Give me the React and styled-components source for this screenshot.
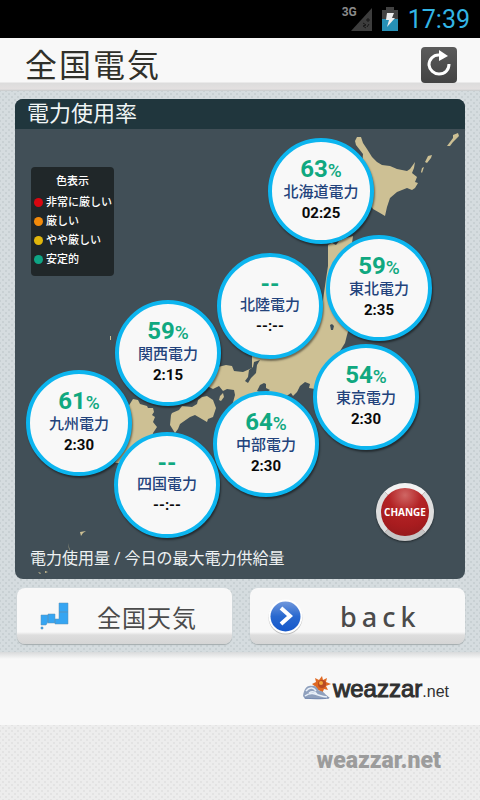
import React from 'react';
import styled, { createGlobalStyle } from 'styled-components';

const Global = createGlobalStyle`
  * { box-sizing: border-box; }
  body { margin: 0; background: #ededed; font-family: Roboto, "Noto Sans CJK JP", sans-serif; }
  button { font-family: inherit; padding: 0; border: 0; cursor: pointer; }
`;

const Page = styled.div`
  display: flex;
  flex-direction: column;
  min-height: 100vh;
`;

const StatusBar = styled.div`
  display: flex;
  justify-content: flex-end;
  align-items: center;
  height: 38px;
  padding-right: 10px;
  background: #000;
  color: #33b5e5;
`;

const Network = styled.span`
  align-self: flex-start;
  margin-top: 4px;
  color: #8a8a8a;
  font-size: 12px;
  font-weight: 700;
  line-height: 16px;
`;

const Signal = styled.svg`
  width: 22px;
  height: 24px;
  margin-left: -7px;
`;

const Battery = styled.svg`
  width: 16px;
  height: 24px;
  margin: 0 10px;
`;

const Clock = styled.time`
  font-size: 25px;
  font-weight: 400;
  line-height: 36px;
  padding-top: 2px;
`;

const Header = styled.header`
  display: flex;
  justify-content: space-between;
  align-items: center;
  height: 53px;
  padding: 0 23px 0 25px;
  background: linear-gradient(#f8f8f8 44px, #dcdcdc 45px, #e3e0e0 51px, #c5c9ca 53px);
`;

const Title = styled.h1`
  margin: 0;
  padding-top: 2px;
  color: #30302a;
  font-size: 32px;
  font-weight: 400;
  line-height: 50px;
  letter-spacing: 2px;
`;

const Refresh = styled.button`
  width: 36px;
  height: 36px;
  border-radius: 4px;
  background: linear-gradient(#5b5b5b, #434343);
  svg { display: block; width: 36px; height: 36px; }
`;

const Main = styled.main`
  padding: 8px 15px;
  background-color: #d5dcdf;
  background-image: radial-gradient(#c8d0d3 1px, transparent 1px), radial-gradient(#c8d0d3 1px, transparent 1px);
  background-size: 6px 6px;
  background-position: 0 0, 3px 3px;
`;

const Panel = styled.section`
  overflow: hidden;
  border-radius: 8px;
  background: #414f57;
`;

const PanelTitle = styled.h2`
  margin: 0;
  padding-left: 12px;
  background: #20363d;
  color: #f0f5f5;
  font-size: 22px;
  font-weight: 400;
  line-height: 30px;
  height: 30px;
`;

const MapArea = styled.div`
  position: relative;
  aspect-ratio: 1;
  min-height: 450px;
`;

const MapDrawing = styled.svg`
  position: absolute;
  inset: 0;
  width: 100%;
  height: 100%;
`;

const Legend = styled.aside`
  position: absolute;
  left: 16px;
  top: 38px;
  height: 109px;
  width: 83px;
  padding-top: 5px;
  border-radius: 4px;
  background: #202729;
  color: #fff;
`;

const LegendTitle = styled.h3`
  margin: 0 0 2px;
  font-size: 11px;
  font-weight: 500;
  line-height: 19px;
  text-align: center;
`;

const LegendList = styled.ul`
  list-style: none;
  margin: 0;
  padding: 0 0 0 3px;
`;

const LegendItem = styled.li`
  display: flex;
  align-items: center;
  gap: 3px;
  font-size: 11px;
  line-height: 19px;
  font-weight: 500;
  white-space: nowrap;
  &::before {
    content: "";
    flex: none;
    width: 9px;
    height: 9px;
    border-radius: 50%;
    background: ${(p) => p.$color};
  }
`;

const Pin = styled.article`
  position: absolute;
  left: ${(p) => p.$x / 4.5}%;
  top: ${(p) => p.$y / 4.5}%;
  display: flex;
  flex-direction: column;
  align-items: center;
  width: 106px;
  height: 106px;
  margin: -53px 0 0 -53px;
  padding-top: 15px;
  border: 4px solid #0cb5ef;
  border-radius: 50%;
  background: #f8f8f8;
  box-shadow: 1px 2px 2px rgba(0, 0, 0, 0.45);
`;

const Rate = styled.strong`
  color: #10a880;
  font-size: 24px;
  font-weight: 700;
  line-height: 24px;
  small { font-size: 19px; font-weight: 500; }
`;

const Company = styled.span`
  color: #23437c;
  font-size: 15px;
  font-weight: 500;
  line-height: 19px;
  white-space: nowrap;
`;

const Updated = styled.time`
  color: #0a0a0a;
  font-size: 15px;
  font-weight: 700;
  line-height: 22px;
`;

const ChangeButton = styled.button`
  position: absolute;
  right: 31px;
  bottom: 38px;
  width: 58px;
  height: 58px;
  border: 5px solid;
  border-color: #f2f2f2 #dedede #c6c6c6;
  border-radius: 50%;
  background: radial-gradient(circle at 50% 15%, #cf6664, #b32325 35%, #a81c1f 65%, #8c191b);
  box-shadow: 0 1px 2px rgba(0, 0, 0, 0.5);
  color: #fff;
  font: 700 10px/48px "Open Sans", sans-serif;
  display: flex;
  justify-content: center;
`;

const Caption = styled.p`
  position: absolute;
  left: 15px;
  bottom: 8px;
  margin: 0;
  color: #eef1f2;
  font-size: 16px;
  line-height: 24px;
  white-space: nowrap;
`;

const Actions = styled.nav`
  display: grid;
  grid-template-columns: 1fr 1fr;
  gap: 18px;
  padding: 9px 0 0 2px;
`;

const ActionButton = styled.button`
  display: flex;
  align-items: center;
  height: 56px;
  padding-left: ${(p) => (p.$latin ? 17 : 23)}px;
  gap: ${(p) => (p.$latin ? 36 : 27)}px;
  border-radius: 8px;
  background: linear-gradient(#f8f8f8 44px, #dedede 47px, #d5d5d5);
  box-shadow: 0 1px 1px #a4abad;
  color: #4b4b4b;
  font-size: ${(p) => (p.$latin ? 27 : 24)}px;
  font-weight: ${(p) => (p.$latin ? 500 : 400)};
  font-family: ${(p) => (p.$latin ? '"Noto Sans", sans-serif' : 'inherit')};
  letter-spacing: ${(p) => (p.$latin ? 5 : 1)}px;
  svg { display: block; flex: none; }
`;

const Brand = styled.section`
  display: flex;
  justify-content: flex-end;
  align-items: center;
  height: 73px;
  padding: 4px 31px 0 0;
  background: linear-gradient(#d8dadb, #f8f8f8 7px);
  color: #303030;
  font-family: "Liberation Sans", sans-serif;
`;

const SunLogo = styled.svg`
  width: 30px;
  height: 28px;
  flex: none;
  margin-bottom: 4px;
`;

const BrandName = styled.a`
  display: flex;
  align-items: center;
  color: inherit;
  text-decoration: none;
`;

const Word = styled.span`
  font-size: 24px;
  line-height: 32px;
  -webkit-text-stroke: 1px #303030;
  small { font-size: 16px; -webkit-text-stroke: 0; }
`;

const Footer = styled.footer`
  flex: 1;
  padding: 20px 39px 20px 0;
  text-align: right;
  background-color: #ededed;
  background-image: radial-gradient(#e3e3e3 1px, transparent 1px), radial-gradient(#e3e3e3 1px, transparent 1px);
  background-size: 6px 6px;
  background-position: 0 0, 3px 3px;
`;

const FooterName = styled.span`
  color: #9c9c9c;
  font-family: Roboto, sans-serif;
  font-size: 23px;
  font-weight: 900;
  line-height: 32px;
`;

const legend = [
  ['#d80610', '非常に厳しい'],
  ['#f28a0a', '厳しい'],
  ['#e0b60c', 'やや厳しい'],
  ['#0ea585', '安定的'],
];

const companies = [
  { name: '北海道電力', rate: 63, time: '02:25', x: 306, y: 62 },
  { name: '北陸電力', time: '--:--', x: 255, y: 177 },
  { name: '東北電力', rate: 59, time: '2:35', x: 364, y: 159 },
  { name: '関西電力', rate: 59, time: '2:15', x: 153, y: 224 },
  { name: '東京電力', rate: 54, time: '2:30', x: 351, y: 268 },
  { name: '九州電力', rate: 61, time: '2:30', x: 64, y: 294 },
  { name: '四国電力', time: '--:--', x: 152, y: 356 },
  { name: '中部電力', rate: 64, time: '2:30', x: 251, y: 315 },
];

function JapanMap() {
  return (
    <MapDrawing viewBox="0 0 450 450" fill="#cdc094" aria-hidden="true">
      <path d="M340 12L342 8 346 8 348 14 352 20 357 28 362 33 367 36 375 37 382 40 392 42 395 40 400 33 399 39 397 44 402 48 400 53 403 54 400 59 397 61 392 59 382 63 375 69 372 78 370 87 365 84 358 80 345 60 348 25 341 16z" />
      <path d="M188 255L197 251 203 238 211 236 217 237 219 242 228 243 237 239 237 223 245 216 280 200 300 185 308 171 311 150 313 137 313 116 317 114 321 116 324 112 331 109 338 107 337 114 342 120 348 150 344 180 335 196 332 206 330 214 325 222 320 236 304 251 300 260 294 259 295 255 290 253 285 257 282 263 278 267 276 264 270 268 265 276 220 282 217 277 220 266 219 261 212 260 208 262 204 257 198 260z" />
      <path d="M156 286L155 296 160 304 163 300 165 295 175 288 180 286 192 293 193 290 198 288 201 279 198 271 192 267 187 268 183 271 182 275 177 278 167 277 164 281 157 284z" />
      <path d="M113 278L118 270 123 271 125 275 132 277 133 279 138 279 139 283 137 286 140 288 138 293 142 298 138 304 135 316 120 330 105 334 100 334 109 320z" />
      <path d="M432 17l6-8v-3l5-2 1 3-6 6-3 4zM410 33l3-6 4-1-1 3-4 5zM406 43l1-4 2-1-2 6zM65 403l6-1-3 2-2 3zM23 443l3 1-1 1zM30 442l3 1-3 1zM53 414l1 6 1 2zM95 207h1v4h-1zM205 267l3-3 1 4-3 4-2-1z" />
      <path fill="#414f57" d="M245 231l-6 2-1 5-4 3-1 7-3 4 3 2 3-5 5-5 1-8zM242 262l3-6 4-2 2 1v4l4 2-5 4zM315 196l2-1 2 2-1 4h-2zM304 245l5-6 5-2 1 7-6 5-1 7-4 2z" />
    </MapDrawing>
  );
}

function Weather() {
  return (
    <SunLogo viewBox="0 0 30 28" aria-hidden="true">
      <path fill="#df6822" d="M19 1l1 4 4-2-1 4 5 2-5 2 2 4-4-1-2 5-3-4-4 1 1-4-4-3 4-2-1-4 4 2z" />
      <circle cx="19" cy="9" r="4" fill="#b84a22" />
      <circle cx="18" cy="8" r="2" fill="#f3a63a" />
      <path fill="#8fa0bd" d="M0 21C1 15 3 10 9 11c4-1 6 3 7 5 4-1 6 4 11 7l-9 1H2z" />
      <path fill="none" stroke="#e8eff8" strokeWidth="1.5" d="M3 16c4-5 8-3 10 0M2 21c8-6 14 1 22 1M6 18c3-2 6-1 8 1" />
      <path fill="none" stroke="#7489b0" d="M2 23c9 1 18 1 24 0" />
    </SunLogo>
  );
}

export default function App() {
  return (
    <Page>
      <Global />
      <StatusBar>
        <Network>3G</Network>
        <Signal viewBox="0 0 22 24" aria-hidden="true">
          <path d="M22 1v23H1z" fill="#3d3d3d" />
          <path d="M13 16l3 2-3 1 3 2M18 11v4m-2-2h4M19 17l-2 3" stroke="#171717" fill="none" />
        </Signal>
        <Battery viewBox="0 0 16 24" aria-hidden="true">
          <path d="M4 0h8v3h4v21H0V3h4z" fill="#424242" />
          <path d="M0 12h16v12H0z" fill="#2690b6" />
          <path d="M5 6h7l-2 5h3L5 20l2-7H4z" fill="#eee" />
        </Battery>
        <Clock>17:39</Clock>
      </StatusBar>
      <Header>
        <Title>全国電気</Title>
        <Refresh aria-label="更新">
          <svg viewBox="0 0 36 36">
            <path d="M19 8C12 7 8 13 8 18c.5 5 5 9 10 9 6 0 10-4 10-10" fill="none" stroke="#fff" strokeWidth="3" />
            <path d="M18 3l9 6-9 5z" fill="#fff" />
          </svg>
        </Refresh>
      </Header>
      <Main>
        <Panel>
          <PanelTitle>電力使用率</PanelTitle>
          <MapArea>
            <JapanMap />
            <Legend>
              <LegendTitle>色表示</LegendTitle>
              <LegendList>
                {legend.map(([color, label]) => (
                  <LegendItem key={label} $color={color}>{label}</LegendItem>
                ))}
              </LegendList>
            </Legend>
            {companies.map((c) => (
              <Pin key={c.name} $x={c.x} $y={c.y}>
                <Rate>{c.rate ? <>{c.rate}<small>%</small></> : '--'}</Rate>
                <Company>{c.name}</Company>
                <Updated>{c.time}</Updated>
              </Pin>
            ))}
            <ChangeButton>CHANGE</ChangeButton>
            <Caption>電力使用量 / 今日の最大電力供給量</Caption>
          </MapArea>
        </Panel>
        <Actions>
          <ActionButton>
            <svg width="30" height="28" viewBox="0 0 30 28" aria-hidden="true">
              <path d="M19 1h9v9h-9zM19 10h9v12H15v-5h4zM8 12h7v9H8zM1 13h7v7l-2 3H1zM1 25h2v2H1z" fill="#36a5f2" stroke="#5e92b5" strokeWidth=".5" />
            </svg>
            全国天気
          </ActionButton>
          <ActionButton $latin>
            <svg width="37" height="37" viewBox="0 0 37 37" aria-hidden="true">
              <defs>
                <linearGradient id="arrowBlue" x2="0" y2="1">
                  <stop stopColor="#7198dc" />
                  <stop offset=".5" stopColor="#2868cf" />
                  <stop offset="1" stopColor="#1557ca" />
                </linearGradient>
              </defs>
              <circle cx="18.500" cy="19.500" r="17" fill="#bbb" />
              <circle cx="18.500" cy="18.500" r="17" fill="#fff" />
              <circle cx="18.500" cy="18.500" r="15" fill="url(#arrowBlue)" />
              <path d="M14 10l9 8-9 8" fill="none" stroke="#fff" strokeWidth="4" />
            </svg>
            back
          </ActionButton>
        </Actions>
      </Main>
      <Brand>
        <BrandName href="#">
          <Weather />
          <Word>weazzar<small>.net</small></Word>
        </BrandName>
      </Brand>
      <Footer><FooterName>weazzar.net</FooterName></Footer>
    </Page>
  );
}
